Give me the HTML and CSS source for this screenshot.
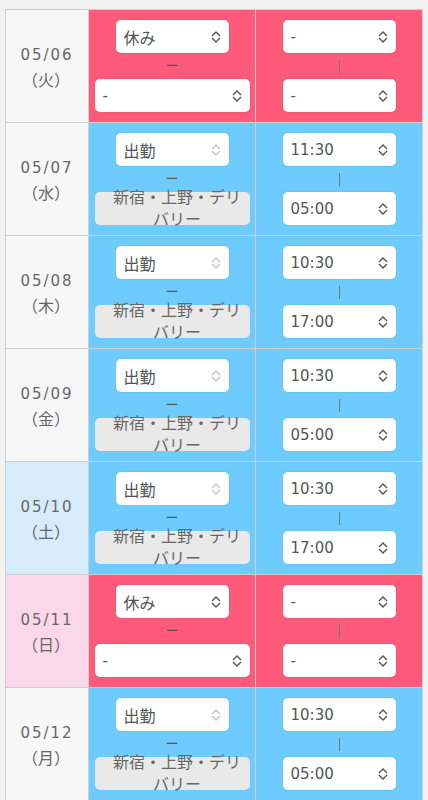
FILE: index.html
```html
<!DOCTYPE html>
<html lang="ja">
<head>
<meta charset="utf-8">
<link rel="stylesheet" href="styles.css">
</head>
<body>
<div class="sheet">
  <!-- row 1 -->
  <div class="date"><span>05/06</span><span class="wd">（火）</span></div>
  <div class="cell off">
    <div class="sel narrow"><span class="jp">休み</span><svg class="arr" viewBox="0 0 10 12"><path d="M1 5 L5 1 L9 5 M1 7 L5 11 L9 7"/></svg></div>
    <div class="sep">ー</div>
    <div class="sel wide"><span>-</span><svg class="arr" viewBox="0 0 10 12"><path d="M1 5 L5 1 L9 5 M1 7 L5 11 L9 7"/></svg></div>
  </div>
  <div class="cell off">
    <div class="sel narrow"><span>-</span><svg class="arr" viewBox="0 0 10 12"><path d="M1 5 L5 1 L9 5 M1 7 L5 11 L9 7"/></svg></div>
    <div class="bar"><i></i></div>
    <div class="sel narrow"><span>-</span><svg class="arr" viewBox="0 0 10 12"><path d="M1 5 L5 1 L9 5 M1 7 L5 11 L9 7"/></svg></div>
  </div>

  <!-- row 2 -->
  <div class="date"><span>05/07</span><span class="wd">（水）</span></div>
  <div class="cell on">
    <div class="sel narrow"><span class="jp">出勤</span><svg class="arr dis" viewBox="0 0 10 12"><path d="M1 5 L5 1 L9 5 M1 7 L5 11 L9 7"/></svg></div>
    <div class="sep">ー</div>
    <div class="shop">新宿・上野・デリバリー</div>
  </div>
  <div class="cell on">
    <div class="sel narrow"><span>11:30</span><svg class="arr" viewBox="0 0 10 12"><path d="M1 5 L5 1 L9 5 M1 7 L5 11 L9 7"/></svg></div>
    <div class="bar"><i></i></div>
    <div class="sel narrow"><span>05:00</span><svg class="arr" viewBox="0 0 10 12"><path d="M1 5 L5 1 L9 5 M1 7 L5 11 L9 7"/></svg></div>
  </div>

  <!-- row 3 -->
  <div class="date"><span>05/08</span><span class="wd">（木）</span></div>
  <div class="cell on">
    <div class="sel narrow"><span class="jp">出勤</span><svg class="arr dis" viewBox="0 0 10 12"><path d="M1 5 L5 1 L9 5 M1 7 L5 11 L9 7"/></svg></div>
    <div class="sep">ー</div>
    <div class="shop">新宿・上野・デリバリー</div>
  </div>
  <div class="cell on">
    <div class="sel narrow"><span>10:30</span><svg class="arr" viewBox="0 0 10 12"><path d="M1 5 L5 1 L9 5 M1 7 L5 11 L9 7"/></svg></div>
    <div class="bar"><i></i></div>
    <div class="sel narrow"><span>17:00</span><svg class="arr" viewBox="0 0 10 12"><path d="M1 5 L5 1 L9 5 M1 7 L5 11 L9 7"/></svg></div>
  </div>

  <!-- row 4 -->
  <div class="date"><span>05/09</span><span class="wd">（金）</span></div>
  <div class="cell on">
    <div class="sel narrow"><span class="jp">出勤</span><svg class="arr dis" viewBox="0 0 10 12"><path d="M1 5 L5 1 L9 5 M1 7 L5 11 L9 7"/></svg></div>
    <div class="sep">ー</div>
    <div class="shop">新宿・上野・デリバリー</div>
  </div>
  <div class="cell on">
    <div class="sel narrow"><span>10:30</span><svg class="arr" viewBox="0 0 10 12"><path d="M1 5 L5 1 L9 5 M1 7 L5 11 L9 7"/></svg></div>
    <div class="bar"><i></i></div>
    <div class="sel narrow"><span>05:00</span><svg class="arr" viewBox="0 0 10 12"><path d="M1 5 L5 1 L9 5 M1 7 L5 11 L9 7"/></svg></div>
  </div>

  <!-- row 5 -->
  <div class="date sat"><span>05/10</span><span class="wd">（土）</span></div>
  <div class="cell on">
    <div class="sel narrow"><span class="jp">出勤</span><svg class="arr dis" viewBox="0 0 10 12"><path d="M1 5 L5 1 L9 5 M1 7 L5 11 L9 7"/></svg></div>
    <div class="sep">ー</div>
    <div class="shop">新宿・上野・デリバリー</div>
  </div>
  <div class="cell on">
    <div class="sel narrow"><span>10:30</span><svg class="arr" viewBox="0 0 10 12"><path d="M1 5 L5 1 L9 5 M1 7 L5 11 L9 7"/></svg></div>
    <div class="bar"><i></i></div>
    <div class="sel narrow"><span>17:00</span><svg class="arr" viewBox="0 0 10 12"><path d="M1 5 L5 1 L9 5 M1 7 L5 11 L9 7"/></svg></div>
  </div>

  <!-- row 6 -->
  <div class="date sun"><span>05/11</span><span class="wd">（日）</span></div>
  <div class="cell off">
    <div class="sel narrow"><span class="jp">休み</span><svg class="arr" viewBox="0 0 10 12"><path d="M1 5 L5 1 L9 5 M1 7 L5 11 L9 7"/></svg></div>
    <div class="sep">ー</div>
    <div class="sel wide"><span>-</span><svg class="arr" viewBox="0 0 10 12"><path d="M1 5 L5 1 L9 5 M1 7 L5 11 L9 7"/></svg></div>
  </div>
  <div class="cell off">
    <div class="sel narrow"><span>-</span><svg class="arr" viewBox="0 0 10 12"><path d="M1 5 L5 1 L9 5 M1 7 L5 11 L9 7"/></svg></div>
    <div class="bar"><i></i></div>
    <div class="sel narrow"><span>-</span><svg class="arr" viewBox="0 0 10 12"><path d="M1 5 L5 1 L9 5 M1 7 L5 11 L9 7"/></svg></div>
  </div>

  <!-- row 7 -->
  <div class="date"><span>05/12</span><span class="wd">（月）</span></div>
  <div class="cell on">
    <div class="sel narrow"><span class="jp">出勤</span><svg class="arr dis" viewBox="0 0 10 12"><path d="M1 5 L5 1 L9 5 M1 7 L5 11 L9 7"/></svg></div>
    <div class="sep">ー</div>
    <div class="shop">新宿・上野・デリバリー</div>
  </div>
  <div class="cell on">
    <div class="sel narrow"><span>10:30</span><svg class="arr" viewBox="0 0 10 12"><path d="M1 5 L5 1 L9 5 M1 7 L5 11 L9 7"/></svg></div>
    <div class="bar"><i></i></div>
    <div class="sel narrow"><span>05:00</span><svg class="arr" viewBox="0 0 10 12"><path d="M1 5 L5 1 L9 5 M1 7 L5 11 L9 7"/></svg></div>
  </div>
</div>
</body>
</html>
```

FILE: styles.css
```css
html, body {
  margin: 0;
  padding: 0;
  background: #f2f2f2;
}
body {
  padding: 9px 0 0 5px;
  font-family: "DejaVu Sans", "Noto Sans CJK JP", sans-serif;
  font-weight: 400;
  color: #5a5a5a;
}
.sheet {
  width: 418px;
  display: grid;
  grid-template-columns: 82px 166px 166px;
  gap: 1px;
  padding: 1px;
  box-sizing: border-box;
  background: #cfcfcf;
}
.date {
  background: #f7f7f7;
  height: 112px;
  display: flex;
  flex-direction: column;
  align-items: center;
  justify-content: center;
  font-size: 15px;
  line-height: 26px;
  color: #666;
  letter-spacing: 2px;
  padding-top: 3px;
  box-sizing: border-box;
}
.date .wd {
  font-size: 16px;
  letter-spacing: 0;
  margin-left: -2px;
}
.date.sat { background: #d6ecfb; }
.date.sun { background: #fbd8e9; }
.cell {
  height: 112px;
  box-sizing: border-box;
  padding: 10px 0 0;
  display: flex;
  flex-direction: column;
  align-items: center;
}
.cell.off { background: #ff5a79; }
.cell.on { background: #6ecbfe; }
.sel {
  height: 33px;
  background: #fff;
  border-radius: 5px;
  box-sizing: border-box;
  padding: 0 8px 0 8px;
  display: flex;
  align-items: center;
  justify-content: space-between;
  font-size: 15px;
  color: #555;
  box-shadow: 0 0 0 1px rgba(0,0,0,0.04);
}
.sel .jp { font-size: 16px; }
.sel.narrow { width: 113px; }
.sel.wide { width: 155px; }
.arr {
  width: 10px;
  height: 12px;
  fill: none;
  stroke: #555;
  stroke-width: 1.4;
}
.arr.dis { stroke: #c4c4c4; }
.sep {
  height: 26px;
  line-height: 26px;
  font-size: 13px;
  color: #555;
}
.bar {
  height: 26px;
  display: flex;
  align-items: center;
}
.bar i {
  display: block;
  width: 1px;
  height: 13px;
  background: #777;
}
.shop {
  width: 155px;
  height: 33px;
  background: #e9e9e9;
  border-radius: 5px;
  box-sizing: border-box;
  padding: 0 4px 0 14px;
  display: flex;
  align-items: center;
  justify-content: center;
  text-align: center;
  font-size: 16px;
  line-height: 22px;
  color: #666;
  letter-spacing: 0;
}
```
